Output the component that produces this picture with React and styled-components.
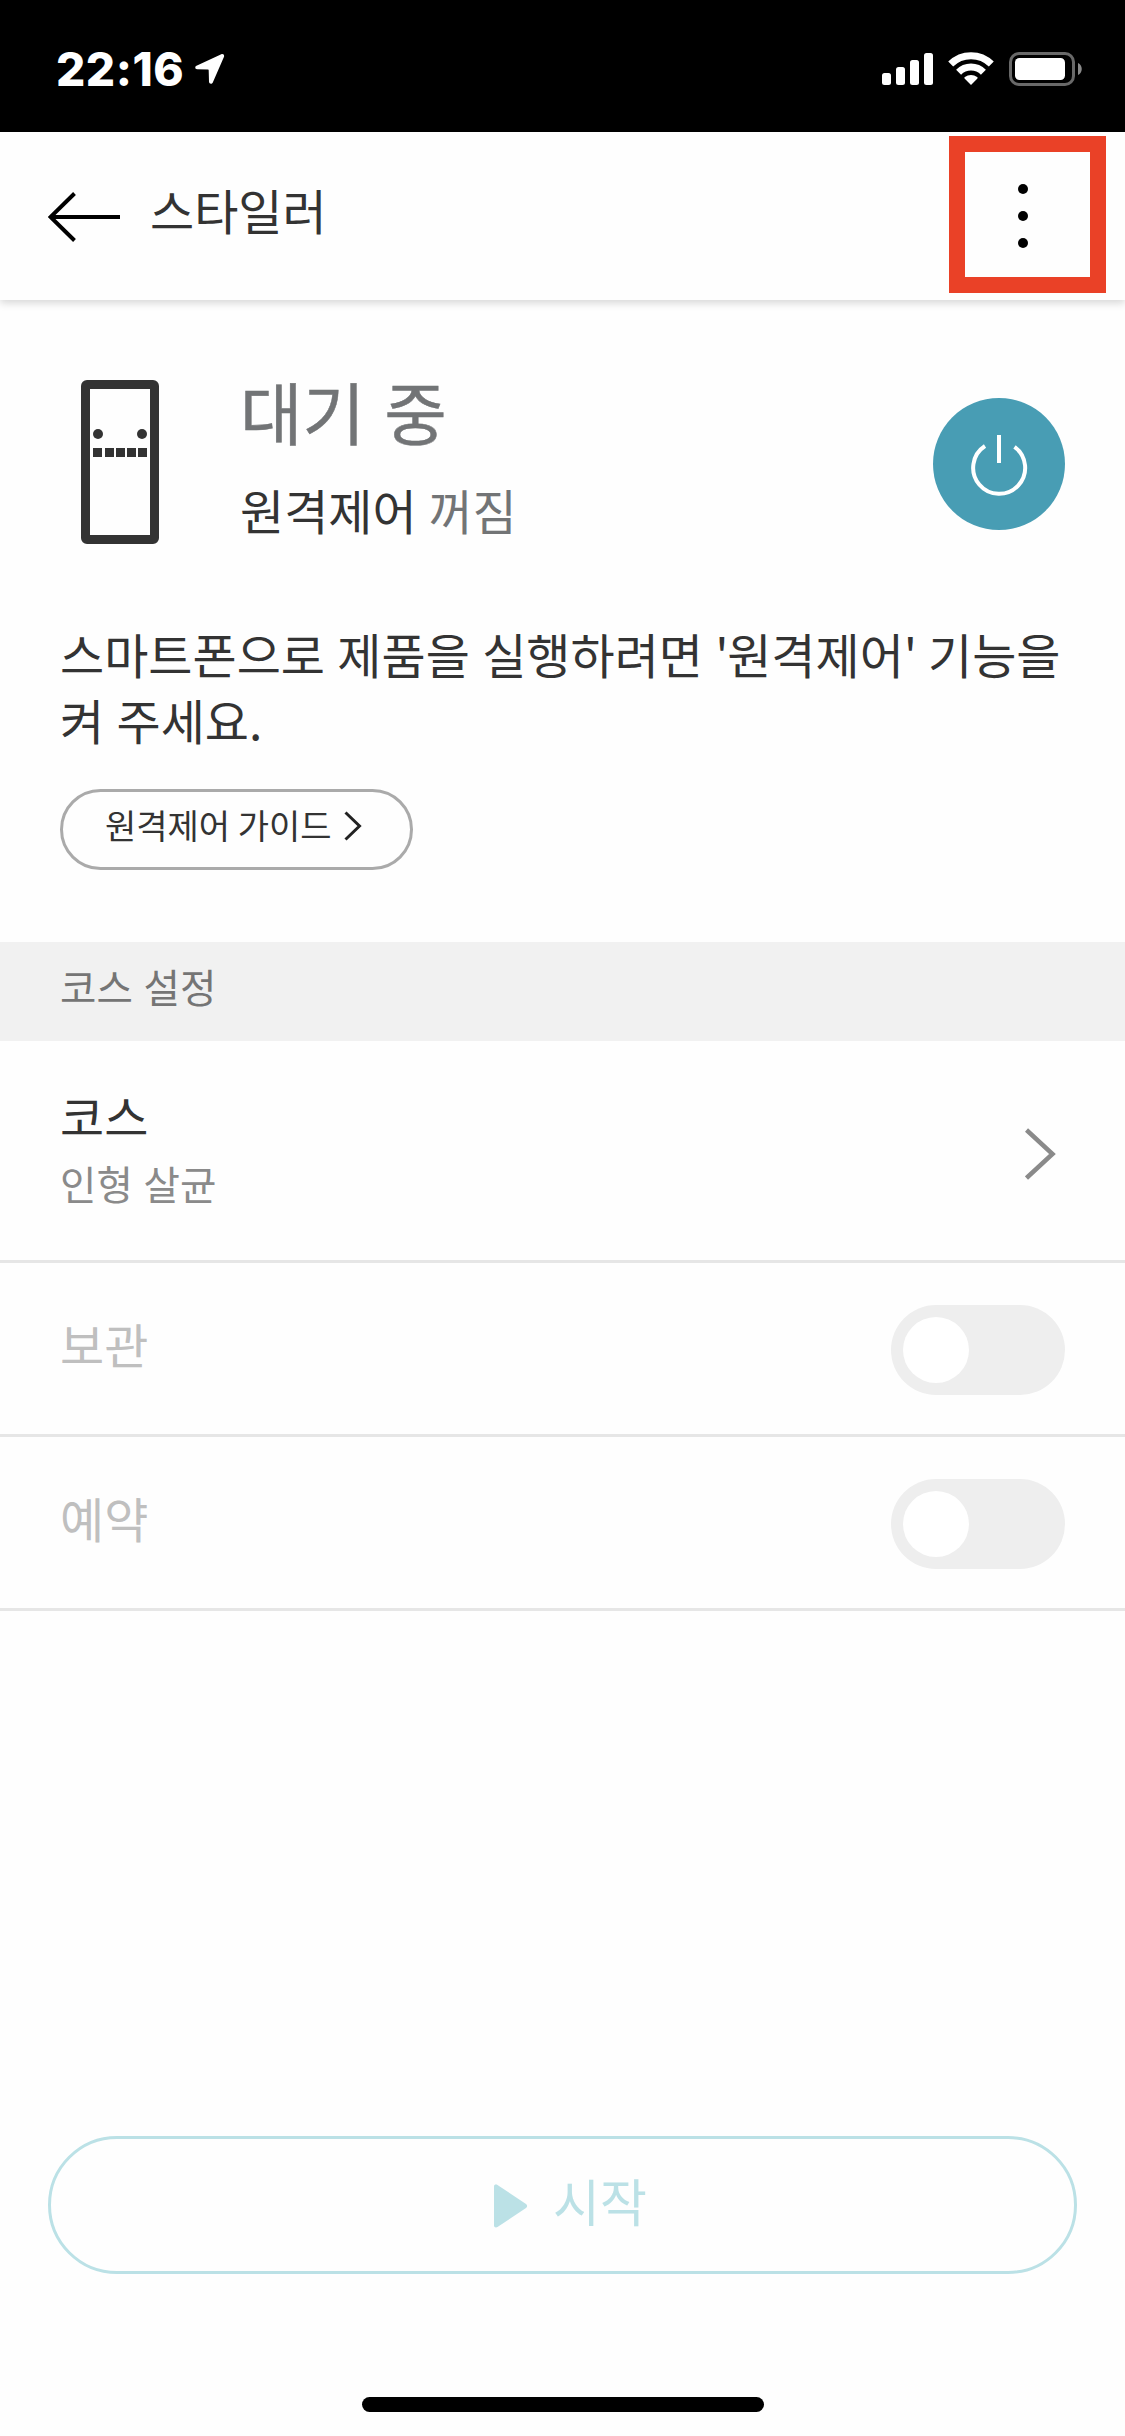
import React from 'react'
import styled, { createGlobalStyle } from 'styled-components'

const GlobalStyle = createGlobalStyle`
* {
  box-sizing: border-box;
}
body {
  margin: 0;
  background: #fefefe;
}
button {
  font-family: inherit;
  background: none;
  border: none;
  padding: 0;
  cursor: pointer;
}
svg {
  display: block;
  flex: none;
}
`
const Screen = styled.div`
width: 1125px;
height: 2436px;
display: flex;
flex-direction: column;
overflow: hidden;
font-family: "Noto Sans CJK KR", sans-serif;
color: #333;
`
const StatusBar = styled.div`
height: 132px;
flex: none;
background: #000;
display: flex;
justify-content: space-between;
padding: 52px 43px 0 56px;
`
const StatusGroup = styled.div`
display: flex;
align-items: flex-start;
gap: ${p => p.$gap || 0}px;
`
const Time = styled.span`
font-family: Inter, sans-serif;
font-size: 46px;
font-weight: 800;
line-height: 35px;
letter-spacing: 0.5px;
color: #fff;
width: 139px;
white-space: nowrap;
`
const Header = styled.header`
height: 168px;
flex: none;
background: #fefefe;
box-shadow: 0 3px 8px rgba(0, 0, 0, 0.16);
display: flex;
align-items: flex-start;
padding: 4px 19px 0 48px;
`
const BackButton = styled.button`
margin-top: 55px;
`
const Title = styled.h1`
flex: 1;
margin: 43px 0 0 29px;
font-size: 48px;
font-weight: 400;
line-height: 60px;
`
const MenuButton = styled.button`
width: 157px;
height: 157px;
border: 16px solid #ea4127;
display: flex;
flex-direction: column;
align-items: center;
justify-content: center;
gap: 17px;
padding: 3px 10px 0 0;
`
const Dot = styled.i`
width: 10px;
height: 10px;
border-radius: 50%;
background: #000;
`
const Status = styled.section`
height: 642px;
flex: none;
padding: 80px 60px 0;
`
const StatusRow = styled.div`
display: flex;
align-items: flex-start;
height: 236px;
padding-left: 21px;
`
const StatusText = styled.div`
flex: 1;
margin-left: 81px;
`
const State = styled.div`
font-size: 68px;
font-weight: 400;
-webkit-text-stroke: 0.5px #727476;
line-height: 80px;
margin-top: -9px;
word-spacing: 4px;
color: #727476;
`
const Remote = styled.div`
font-size: 48px;
line-height: 60px;
margin-top: 28px;
word-spacing: 1px;
span {
  color: #727476;
}
`
const PowerButton = styled.button`
width: 132px;
height: 132px;
margin-top: 18px;
border-radius: 50%;
background: #489db4;
`
const Message = styled.p`
margin: 4px 0 0;
font-size: 48px;
line-height: 66px;
word-spacing: 1.6px;
white-space: nowrap;
`
const Quote = styled.span`
letter-spacing: -1.5px;
`
const GuideButton = styled.button`
width: 353px;
height: 81px;
margin-top: 37px;
border: 3px solid #aaa;
border-radius: 41px;
display: flex;
align-items: flex-start;
padding: 8px 0 0 42px;
font-size: 34px;
line-height: 50px;
color: #333;
white-space: nowrap;
svg {
  margin: 11px 0 0 12px;
}
`
const SectionTitle = styled.h2`
height: 99px;
flex: none;
margin: 0;
padding: 19px 60px 0;
background: #f1f1f1;
font-size: 39.6px;
font-weight: 400;
line-height: 50px;
word-spacing: 1.8px;
color: #757575;
`
const Row = styled.div`
height: ${p => p.$tall ? 222 : 174}px;
flex: none;
border-bottom: 3px solid #e6e6e6;
display: flex;
justify-content: space-between;
align-items: flex-start;
padding: ${p => p.$tall ? '44px 69px 0 60px' : '42px 60px 0'};
`
const Label = styled.div`
font-size: 48px;
line-height: 60px;
margin-top: ${p => p.$disabled ? 8 : 0}px;
color: ${p => p.$disabled ? '#bfbfbf' : '#333'};
`
const Value = styled.div`
font-size: 39.6px;
line-height: 50px;
margin-top: 13px;
word-spacing: 1.8px;
color: #8a8a8a;
`
const RowArrow = styled.svg`
margin-top: 43px;
`
const Toggle = styled.button`
width: 174px;
height: 90px;
border-radius: 45px;
background: #eee;
padding: 12px;
display: flex;
`
const Knob = styled.span`
width: 66px;
height: 66px;
border-radius: 50%;
background: #fff;
`
const Footer = styled.footer`
margin-top: auto;
padding-bottom: 24px;
display: flex;
flex-direction: column;
align-items: center;
`
const StartButton = styled.button`
width: 1029px;
height: 138px;
border: 3px solid #bbe1e6;
border-radius: 69px;
display: flex;
align-items: flex-start;
padding: 29px 0 0 443px;
gap: 25px;
font-size: 51px;
line-height: 64px;
color: #bbe1e6;
svg {
  margin-top: 16px;
}
`
const HomeBar = styled.div`
width: 402px;
height: 15px;
margin-top: 123px;
border-radius: 8px;
background: #000;
`

const LocationIcon = () => (
  <svg width="30" height="33" viewBox="0 0 30 33">
    <path d="M26.3 2.3 1.500 13.700c-1.900.9-1.500 3.500.6 3.600l10.600.3c.7 0 1 .4 1 1l.3 11.200c.1 2.300 2.900 2.700 3.800.7L28.900 5C29.700 3 28.200 1.500 26.300 2.300z" fill="#fff" />
  </svg>
)

const SignalIcon = () => (
  <svg width="51" height="34" viewBox="0 0 51 34" fill="#fff">
    <rect x="0" y="21" width="9" height="12" rx="2.5" />
    <rect x="14" y="15" width="9" height="18" rx="2.5" />
    <rect x="28" y="8" width="9" height="25" rx="2.5" />
    <rect x="42" y="1" width="9" height="32" rx="2.5" />
  </svg>
)

const WifiIcon = () => (
  <svg width="46" height="34" viewBox="0 0 46 34">
    <g fill="none" stroke="#fff" strokeWidth="7">
      <path d="M2.7 12a28.8 28.8 0 0 1 40.6 0" />
      <path d="M10.6 20.2a17.5 17.5 0 0 1 24.8 0" />
    </g>
    <path d="M23 33l-6.2-6.3c-.6-.6-.5-1.3.1-1.7a10 10 0 0 1 12.2 0c.6.4.7 1.1.1 1.7z" fill="#fff" />
  </svg>
)

const BatteryIcon = () => (
  <svg width="73" height="34" viewBox="0 0 73 34">
    <rect x="1.5" y="1.5" width="63" height="31" rx="8.5" fill="none" stroke="#696969" strokeWidth="3" />
    <rect x="6" y="6" width="50" height="22" rx="4.5" fill="#fff" />
    <path d="M69 11c5 2 5 10 0 12z" fill="#8a8a8a" />
  </svg>
)

const BackIcon = () => (
  <svg width="73" height="52" viewBox="0 0 73 52" fill="none" stroke="#000" strokeWidth="4">
    <path d="M26.5 2.500 2.500 26l24 23.500M3 26h69" />
  </svg>
)

const StylerIcon = () => (
  <svg width="78" height="164" viewBox="0 0 78 164" fill="#333">
    <path d="M6 0h66a6 6 0 0 1 6 6v152a6 6 0 0 1-6 6H6a6 6 0 0 1-6-6V6a6 6 0 0 1 6-6zM9 9v146h60V9z" fillRule="evenodd" />
    <circle cx="17" cy="54" r="5" />
    <circle cx="61" cy="54" r="5" />
    {[12, 24, 35, 46, 57].map(x => <rect key={x} x={x} y="68" width="9" height="9" />)}
  </svg>
)

const PowerIcon = () => (
  <svg width="132" height="132" viewBox="0 0 132 132" fill="none" stroke="#fff" strokeWidth="4">
    <path d="M66 37v28" />
    <path d="M52 48a26 26 0 1 0 29.5.8" />
  </svg>
)

const ToggleRow = ({ label }) => (
  <Row>
    <Label $disabled>{label}</Label>
    <Toggle><Knob /></Toggle>
  </Row>
)

const App = () => {
  return (
    <Screen>
      <GlobalStyle />
      <StatusBar>
        <StatusGroup>
          <Time>22:16</Time>
          <LocationIcon />
        </StatusGroup>
        <StatusGroup $gap={15}>
          <SignalIcon />
          <WifiIcon />
          <BatteryIcon />
        </StatusGroup>
      </StatusBar>
      <Header>
        <BackButton><BackIcon /></BackButton>
        <Title>스타일러</Title>
        <MenuButton><Dot /><Dot /><Dot /></MenuButton>
      </Header>
      <Status>
        <StatusRow>
          <StylerIcon />
          <StatusText>
            <State>대기 중</State>
            <Remote>원격제어 <span>꺼짐</span></Remote>
          </StatusText>
          <PowerButton><PowerIcon /></PowerButton>
        </StatusRow>
        <Message>
          스마트폰으로 제품을 실행하려면 <Quote>'</Quote>원격제어<Quote>'</Quote> 기능을<br />켜 주세요.
        </Message>
        <GuideButton>
          원격제어 가이드
          <svg width="18" height="30" viewBox="0 0 18 30" fill="none" stroke="#222" strokeWidth="3">
            <path d="M1.5 1.500 15.500 15l-14 13.500" />
          </svg>
        </GuideButton>
      </Status>
      <SectionTitle>코스 설정</SectionTitle>
      <Row $tall>
        <div>
          <Label>코스</Label>
          <Value>인형 살균</Value>
        </div>
        <RowArrow width="31" height="52" viewBox="0 0 31 52" fill="none" stroke="#8a8a8a" strokeWidth="4.5">
          <path d="M1.5 2 27.500 26l-26 24" />
        </RowArrow>
      </Row>
      <ToggleRow label="보관" />
      <ToggleRow label="예약" />
      <Footer>
        <StartButton>
          <svg width="34" height="44" viewBox="0 0 34 44" fill="#bbe1e6">
            <path d="M0 2.500C0 .5 2 0 3.500 1L32 20c1.500 1 1.500 3 0 4L3.500 43C2 44 0 43.500 0 41.500z" />
          </svg>
          시작
        </StartButton>
        <HomeBar />
      </Footer>
    </Screen>
  )
}

export default App
